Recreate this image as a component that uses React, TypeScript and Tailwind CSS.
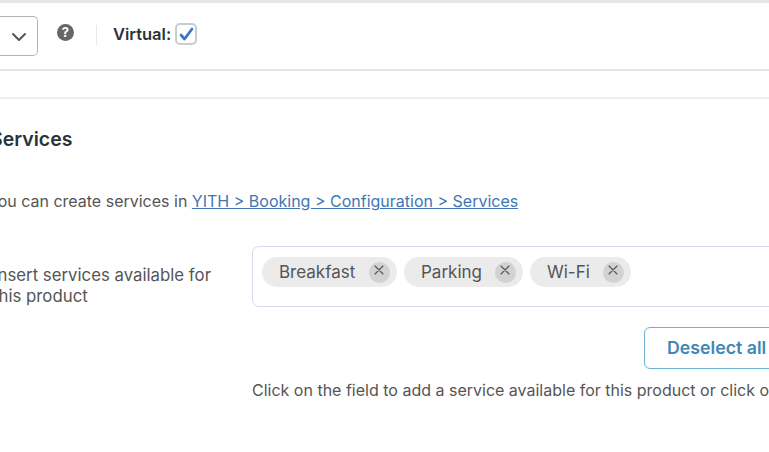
const FONT = "font-['Inter','Noto_Sans',sans-serif]";

function ServiceTag({ label, width }: { label: string; width: string }) {
  return (
    <span className={`flex h-[30px] items-center justify-between rounded-full bg-[#ebebeb] pl-[17px] pr-[7px] text-[17px] text-[#555] ${width}`}>
      <span className="translate-y-[1px]">{label}</span>
      <span className="flex h-[21px] w-[21px] items-center justify-center rounded-full bg-[#d2d2d2]">
        <svg width="10" height="10" viewBox="0 0 10 10" className="-translate-x-[1px] -translate-y-[2px]" fill="none" stroke="#555" strokeWidth="1.1" strokeLinecap="round">
          <path d="M1 1l8 8M9 1l-8 8" />
        </svg>
      </span>
    </span>
  );
}

export default function App() {
  return (
    <div className={`h-[452px] w-[769px] overflow-hidden bg-white ${FONT}`}>
      <div className="h-[3px] bg-[#e6e6e6]" />

      <div className="flex h-[68px] items-start border-b-2 border-[#e6e6e6]">
        <div className="mt-[13px] flex h-[40px] w-[38px] items-center justify-end rounded-r-[5px] border border-l-0 border-[#b4b4b4] pr-[10px]">
          <svg width="16" height="10" viewBox="0 0 16 10" fill="none" stroke="#555" strokeWidth="2" strokeLinecap="round" strokeLinejoin="round" className="translate-y-[1px]">
            <path d="M2 2l6 6 6-6" />
          </svg>
        </div>
        <span className="ml-[19px] mt-[21px] flex h-[17px] w-[17px] items-center justify-center rounded-full bg-[#666] text-[13px] font-bold leading-none text-white">?</span>
        <span className="ml-[22px] mt-[22px] h-[20px] w-px bg-[#e8e8e8]" />
        <span className="ml-[16px] mt-[21px] text-[16.5px] font-semibold leading-[20px] text-[#2c3338]">Virtual:</span>
        <span className="ml-[4px] mt-[20px] flex h-[22px] w-[22px] items-center justify-center rounded-[5px] border-2 border-[#c8ccd0]">
          <svg width="15" height="14" viewBox="0 0 15 14" fill="none" stroke="#3f76bd" strokeWidth="2.8" strokeLinecap="round" strokeLinejoin="round">
            <path d="M2 8l3.5 4L13 2" />
          </svg>
        </span>
      </div>

      <div className="mt-[26px] h-[2px] bg-[#eeeeee]" />

      <h2 className="-ml-[10px] mt-[28px] text-[19.5px] font-semibold leading-[24px] text-[#2c3338]">Services</h2>

      <p className="-ml-[12px] mt-[38px] whitespace-nowrap text-[16px] leading-[24px] text-[#555]">
        You can create services in{" "}
        <a className="text-[#3f76b5] underline" href="#">YITH &gt; Booking &gt; Configuration &gt; Services</a>
      </p>

      <div className="mt-[33px] flex">
        <p className="-ml-[7px] mt-[19px] w-[259px] shrink-0 text-[16.8px] leading-[21px] text-[#555]">
          Insert services available for<br />this product
        </p>
        <div className="flex h-[61px] w-[560px] shrink-0 items-start gap-[7px] rounded-[7px] border border-[#d5dae8] pl-[9px] pt-[10px]">
          <ServiceTag label="Breakfast" width="w-[135px]" />
          <ServiceTag label="Parking" width="w-[119px]" />
          <ServiceTag label="Wi-Fi" width="w-[101px]" />
        </div>
      </div>

      <div className="ml-[644px] mt-[20px] flex h-[42px] w-[160px] items-center rounded-[6px] border border-[#6fb0d6] pl-[22px] pt-[1px] text-[17.75px] font-semibold text-[#3f87b5]">
        Deselect all
      </div>

      <p className="ml-[252px] mt-[9px] whitespace-nowrap text-[16px] leading-[24px] text-[#555]">
        Click on the field to add a service available for this product or click on the button to select all
      </p>
    </div>
  );
}
